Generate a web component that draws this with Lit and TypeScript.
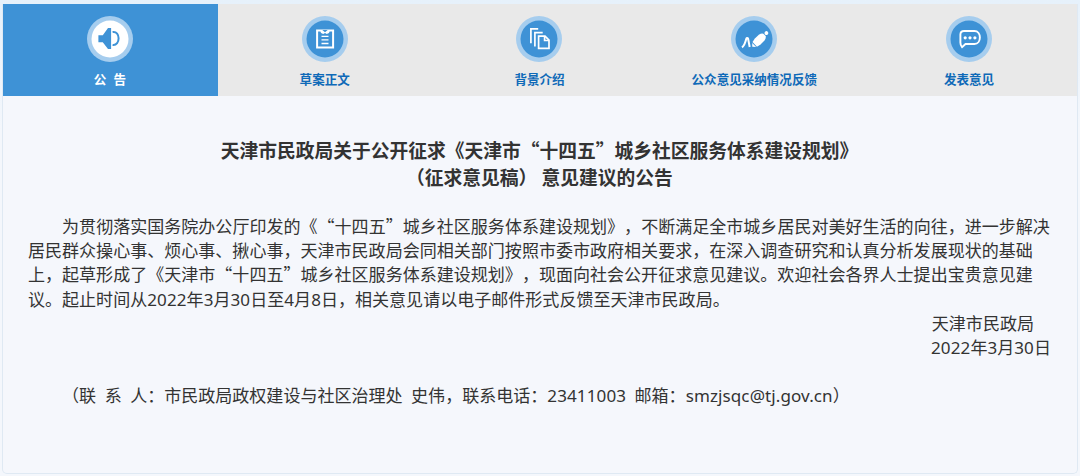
import { LitElement, html, css, svg } from "lit";
import { customElement, property, state } from "lit/decorators.js";

const icons: Record<string, unknown> = {
  horn: svg`
    <path d="M11.4 19.2h4.4l5.2-7.1h3.1v20.8H21l-5.2-6.6h-4.4z" fill="#3e92d6" />
    <path d="M25.6 16c8-1.4 8 14 0 12.9" fill="none" stroke="#3e92d6" stroke-width="2" />
  `,
  draft: svg`
    <path d="M15.1 14.5h16v17.1h-16z" fill="none" stroke="#fff" stroke-width="2" />
    <path d="M18 14h10l-1 3-2.2 1-1.8-1-1.8 1-2.2-1z" fill="#fff" />
    <path d="M20.3 14h5.4l-2.7 2.2z" fill="#3e92d6" />
    <path d="M19.5 20.3h7M19.5 23.8h7M19.5 27.5h7" stroke="#fff" stroke-width="1.3" />
  `,
  copy: svg`
    <g fill="none" stroke="#fff" stroke-width="1.7">
      <path d="M14.9 27.2V12.8h7.3" />
      <path d="M18.9 30.4V16.6h7.8" />
      <path d="M22.6 20.2h6.4l4 4v8.2H22.6z" />
      <path d="M28.6 20.2v4.3H33" />
    </g>
  `,
  pen: svg`
    <path d="M11 31.3c2.2-1.5 3.4-5 4.3-8.6.3-1 1.4-1 1.8 0l1.6 8.3" fill="none" stroke="#fff" stroke-width="2" />
    <g transform="translate(21.3 30.7) rotate(-44)" fill="#fff">
      <path d="M0 0 2.6-2.8V2.8z" />
      <path d="M3.4-3.2 7.5-4.1H13Q16-3.5 17-1.7V1.7Q16 3.5 13 4.1H7.5L3.4 3.2z" />
      <circle cx="19.6" cy="0" r="1.9" />
    </g>
  `,
  chat: svg`
    <path d="M18 15h10.4c7.3 0 7.3 13 0 13H19.5l-3.5 3.1c-1-1-1.6-2.300-1.6-4.5V18.500C14.400 16 15.700 15 18 15z" fill="none" stroke="#fff" stroke-width="1.9" />
    <circle cx="19.2" cy="21.8" r="1.6" fill="#fff" />
    <circle cx="24" cy="21.8" r="1.6" fill="#fff" />
    <circle cx="28.9" cy="21.8" r="1.6" fill="#fff" />
  `,
};

const tabs = [
  { label: "公\u00a0\u00a0告", icon: "horn" },
  { label: "草案正文", icon: "draft" },
  { label: "背景介绍", icon: "copy" },
  { label: "公众意见采纳情况反馈", icon: "pen" },
  { label: "发表意见", icon: "chat" },
];

@customElement("notice-tab")
export class NoticeTab extends LitElement {
  @property() label = "";
  @property() icon = "";
  @property({ type: Boolean, reflect: true }) active = false;

  static styles = css`
    :host {
      flex: 1;
      display: flex;
      flex-direction: column;
      align-items: center;
      box-sizing: border-box;
      padding: 12px 1px 0 0;
      color: #0f6ab8;
      cursor: pointer;
    }

    :host([active]) {
      background: #3e92d6;
      color: #fff;
    }

    svg {
      display: block;
      width: 46px;
      height: 46px;
    }

    .ring {
      fill: #a6cdee;
    }

    .disc {
      fill: #3e92d6;
    }

    :host([active]) .disc {
      fill: #fff;
    }

    .label {
      padding-top: 8px;
      font-size: 12.55px;
      font-weight: bold;
      line-height: 18px;
      white-space: nowrap;
      word-spacing: 0.7px;
    }
  `;

  render() {
    return html`
      <svg viewBox="0 0 46 46">
        <circle class="ring" cx="23" cy="23" r="23" />
        <circle class="disc" cx="23" cy="23" r="18.5" />
        ${icons[this.icon]}
      </svg>
      <span class="label">${this.label}</span>
    `;
  }
}

@customElement("app-root")
export class AppRoot extends LitElement {
  @state() private _active = 0;

  static styles = css`
    :host {
      display: block;
      box-sizing: border-box;
      height: 476px;
      padding: 4px 2px 2px;
      background: linear-gradient(#e6f1fb, #f4f7fc 130px);
      color: #333;
      font-family: "Noto Sans CJK SC", sans-serif;
      text-spacing-trim: space-all;
    }

    .panel {
      box-sizing: border-box;
      height: 470px;
      border: 1px solid #dfe9f3;
      border-top: none;
      border-radius: 0 0 5px 5px;
      background: #f5f7fc;
    }

    .tabs {
      display: flex;
      height: 92px;
      background: #e9e9e9;
    }

    .content {
      padding: 41px 26px 0 25px;
    }

    h1 {
      margin: 0;
      font-size: 18.75px;
      font-weight: bold;
      line-height: 26.8px;
      text-align: center;
      white-space: nowrap;
    }

    p {
      margin: 0;
      font-size: 17.05px;
      line-height: 24.2px;
      white-space: pre;
    }

    .body {
      padding-top: 23.4px;
    }

    .indent {
      text-indent: 2em;
    }

    .sign {
      text-align: right;
    }

    .office {
      padding-right: 17px;
    }

    .contact {
      padding-top: 24.2px;
      word-spacing: -0.3px;
    }

    .latin {
      font-family: "Noto Sans", sans-serif;
      letter-spacing: 0.1px;
      line-height: 1;
    }
  `;

  private _latin(text: string) {
    return html`<span class="latin">${text}</span>`;
  }

  render() {
    const n = this._latin;
    return html`
      <div class="panel">
        <div class="tabs">
          ${tabs.map(
            (tab, i) => html`<notice-tab
              .label=${tab.label}
              .icon=${tab.icon}
              ?active=${i === this._active}
              @click=${() => (this._active = i)}
            ></notice-tab>`,
          )}
        </div>
        <div class="content">
          <h1>
            天津市民政局关于公开征求《天津市“十四五”城乡社区服务体系建设规划》<br />
            （征求意见稿） 意见建议的公告
          </h1>
          <div class="body">
            <p class="indent">为贯彻落实国务院办公厅印发的《“十四五”城乡社区服务体系建设规划》，不断满足全市城乡居民对美好生活的向往，进一步解决</p>
            <p>居民群众操心事、烦心事、揪心事，天津市民政局会同相关部门按照市委市政府相关要求，在深入调查研究和认真分析发展现状的基础</p>
            <p>上，起草形成了《天津市“十四五”城乡社区服务体系建设规划》，现面向社会公开征求意见建议。欢迎社会各界人士提出宝贵意见建</p>
            <p>议。起止时间从${n("2022")}年${n("3")}月${n("30")}日至${n("4")}月${n("8")}日，相关意见请以电子邮件形式反馈至天津市民政局。</p>
            <p class="sign office">天津市民政局</p>
            <p class="sign">${n("2022")}年${n("3")}月${n("30")}日</p>
            <p class="indent contact">（联${n("  ")}系${n("  ")}人：市民政局政权建设与社区治理处${n("  ")}史伟，联系电话：${n("23411003  ")}邮箱：${n("smzjsqc@tj.gov.cn")}）</p>
          </div>
        </div>
      </div>
    `;
  }
}

declare global {
  interface HTMLElementTagNameMap {
    "app-root": AppRoot;
    "notice-tab": NoticeTab;
  }
}
